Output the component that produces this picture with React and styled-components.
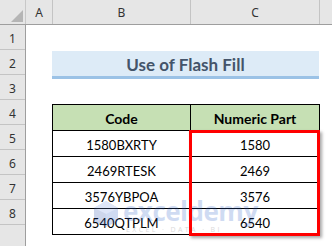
import styled, { createGlobalStyle } from "styled-components";

const Global = createGlobalStyle`
  html, body {
    margin: 0;
    padding: 0;
    background: #ffffff;
    overflow: hidden;
  }
  #root {
    width: 332px;
    height: 246px;
  }
`;

const Sheet = styled.div`
  width: 332px;
  height: 246px;
  display: flex;
  flex-direction: column;
  background: #fff;
  overflow: hidden;
`;

const HeaderRow = styled.div`
  display: flex;
  height: 24px;
  flex: none;
  background: #e6e6e6;
  border-bottom: 1px solid #9e9e9e;
`;

const Corner = styled.div`
  position: relative;
  width: 25px;
  flex: none;
  border-right: 1px solid #c8c8c8;
  &::after {
    content: "";
    position: absolute;
    right: 2px;
    bottom: 2px;
    width: 0;
    height: 0;
    border-left: 12px solid transparent;
    border-bottom: 12px solid #b5b5b5;
  }
`;

const ColHead = styled.div`
  width: ${(p) => p.$w}px;
  flex: ${(p) => (p.$w ? "none" : "1")};
  border-right: ${(p) => (p.$w ? "1px solid #c4c4c4" : "none")};
  display: flex;
  align-items: center;
  justify-content: center;
  font-family: "Noto Sans", sans-serif;
  font-size: 12px;
  color: #333;
`;

const Body = styled.div`
  display: flex;
  flex: 1;
`;

const RowHeads = styled.div`
  width: 25px;
  flex: none;
  background: #e6e6e6;
  border-right: 1px solid #9e9e9e;
  display: flex;
  flex-direction: column;
`;

const RowHead = styled.div`
  height: 25px;
  flex: none;
  border-bottom: 1px solid #c4c4c4;
  display: flex;
  align-items: center;
  justify-content: center;
  padding-top: 2px;
  box-sizing: border-box;
  font-family: "Noto Sans", sans-serif;
  font-size: 12px;
  color: #333;
`;

const Cells = styled.div`
  flex: 1;
  display: flex;
  flex-direction: column;
  padding-left: 26px;
`;

const Spacer = styled.div`
  height: ${(p) => p.$h}px;
  flex: none;
`;

const Title = styled.div`
  width: 267px;
  height: 23px;
  flex: none;
  background: #ddebf7;
  border-bottom: 3px solid #9bc2e6;
  display: flex;
  align-items: center;
  justify-content: center;
  padding-top: 2px;
  box-sizing: content-box;
  font-family: Lato, sans-serif;
  font-weight: 700;
  font-size: 17px;
  color: #44546a;
`;

const TableWrap = styled.div`
  position: relative;
  width: 268px;
`;

const Table = styled.div`
  display: grid;
  grid-template-columns: 137px 128px;
  grid-auto-rows: 25px;
  gap: 1px;
  padding: 1px;
  background: #000;
`;

const Cell = styled.div`
  background: ${(p) => (p.$head ? "#c6e0b4" : "#fff")};
  display: flex;
  align-items: center;
  justify-content: center;
  padding-top: 2px;
  font-family: Lato, sans-serif;
  font-size: ${(p) => (p.$head ? "14px" : "13px")};
  font-weight: ${(p) => (p.$head ? 700 : 400)};
  color: #000;
`;

const Highlight = styled.div`
  position: absolute;
  left: 137px;
  top: 26px;
  width: 125px;
  height: 100px;
  border: 3px solid #ff0000;
  box-shadow: 2px 2px 3px rgba(0, 0, 0, 0.35);
`;

const Watermark = styled.div`
  position: absolute;
  left: 41px;
  top: 96px;
  display: flex;
  align-items: flex-start;
  gap: 4px;
  opacity: 0.22;
  pointer-events: none;
`;

const Brand = styled.div`
  display: flex;
  flex-direction: column;
  align-items: flex-start;
`;

const BrandName = styled.div`
  font-family: "Open Sans", sans-serif;
  font-weight: 700;
  font-size: 26px;
  line-height: 22px;
  color: #2b5fc9;
  letter-spacing: -0.5px;
`;

const BrandTag = styled.div`
  font-family: "Open Sans", sans-serif;
  font-size: 7px;
  letter-spacing: 2.4px;
  color: #555;
  margin-top: 3px;
  margin-left: 3px;
`;

const rows = [
  ["1580BXRTY", "1580"],
  ["2469RTESK", "2469"],
  ["3576YBPOA", "3576"],
  ["6540QTPLM", "6540"],
];

export default function App() {
  return (
    <>
      <Global />
      <Sheet>
        <HeaderRow>
          <Corner />
          <ColHead $w={26}>A</ColHead>
          <ColHead $w={137}>B</ColHead>
          <ColHead $w={128}>C</ColHead>
          <ColHead />
        </HeaderRow>
        <Body>
          <RowHeads>
            {[1, 2, 3, 4, 5, 6, 7, 8, 9].map((n) => (
              <RowHead key={n}>{n <= 8 ? n : ""}</RowHead>
            ))}
          </RowHeads>
          <Cells>
            <Spacer $h={26} />
            <Title>Use of Flash Fill</Title>
            <Spacer $h={25} />
            <TableWrap>
              <Table>
                <Cell $head>Code</Cell>
                <Cell $head>Numeric Part</Cell>
                {rows.map(([code, num]) => [
                  <Cell key={code}>{code}</Cell>,
                  <Cell key={num}>{num}</Cell>,
                ])}
              </Table>
              <Watermark>
                <svg width="26" height="28" viewBox="0 0 26 28">
                  <path d="M13 1 L25 8 L25 21 L13 27 L1 21 L1 8 Z" fill="#2b5fc9" />
                  <path d="M13 1 L25 8 L13 14 L1 8 Z" fill="#6f93e0" />
                  <path d="M13 14 L13 27 L1 21 L1 8 Z" fill="#1f4aa8" />
                </svg>
                <Brand>
                  <BrandName>exceldemy</BrandName>
                  <BrandTag>EXCEL · DATA · BI</BrandTag>
                </Brand>
              </Watermark>
              <Highlight />
            </TableWrap>
          </Cells>
        </Body>
      </Sheet>
    </>
  );
}
